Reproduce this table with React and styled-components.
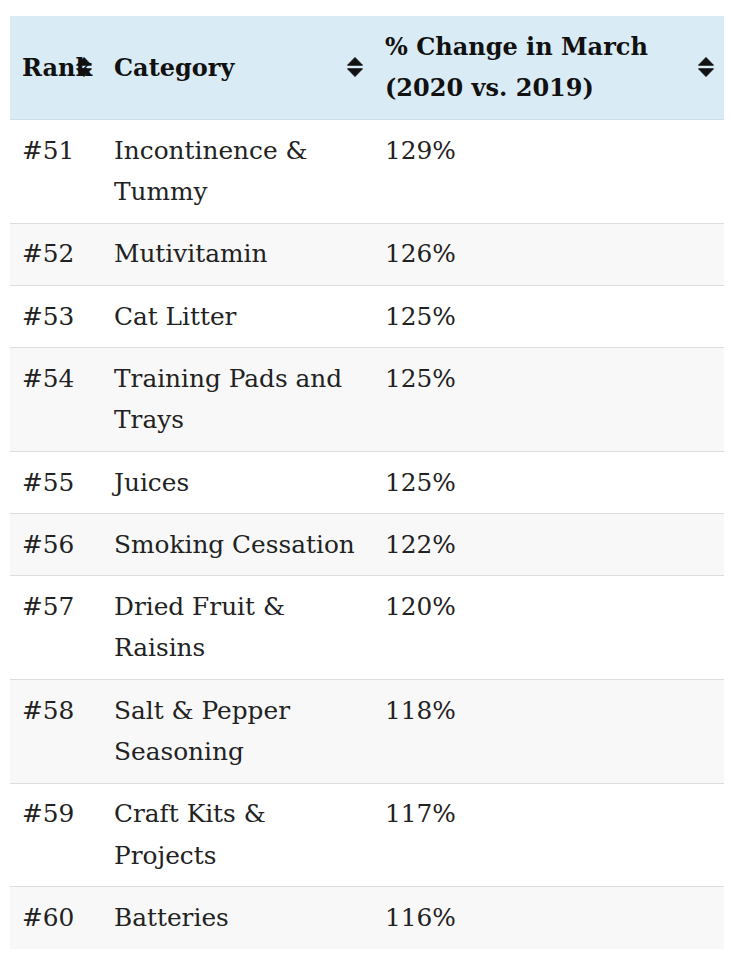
import React from "react";
import styled, { createGlobalStyle } from "styled-components";

const GlobalStyle = createGlobalStyle`
  html, body {
    margin: 0;
    padding: 0;
    background: #ffffff;
  }
`;

const rows = [
  { rank: "#51", category: "Incontinence & Tummy", change: "129%" },
  { rank: "#52", category: "Mutivitamin", change: "126%" },
  { rank: "#53", category: "Cat Litter", change: "125%" },
  { rank: "#54", category: "Training Pads and Trays", change: "125%" },
  { rank: "#55", category: "Juices", change: "125%" },
  { rank: "#56", category: "Smoking Cessation", change: "122%" },
  { rank: "#57", category: "Dried Fruit & Raisins", change: "120%" },
  { rank: "#58", category: "Salt & Pepper Seasoning", change: "118%" },
  { rank: "#59", category: "Craft Kits & Projects", change: "117%" },
  { rank: "#60", category: "Batteries", change: "116%" },
];

const SortIcon = () => (
  <SortGlyph viewBox="0 0 16 20" aria-hidden="true">
    <path d="M8 0.5 L15.5 8.2 H0.5 Z" strokeLinejoin="round" />
    <path d="M0.5 11.8 H15.5 L8 19.5 Z" strokeLinejoin="round" />
  </SortGlyph>
);

export default function App() {
  return (
    <Page>
      <GlobalStyle />
      <Table>
        <colgroup>
          <col style={{ width: 92 }} />
          <col style={{ width: 271 }} />
          <col />
        </colgroup>
        <thead>
          <tr>
            <HeadCell>
              Rank
              <SortIcon />
            </HeadCell>
            <HeadCell>
              Category
              <SortIcon />
            </HeadCell>
            <HeadCell>
              % Change in March
              <br />
              (2020 vs. 2019)
              <SortIcon />
            </HeadCell>
          </tr>
        </thead>
        <tbody>
          {rows.map((r, i) => (
            <Row key={r.rank} $striped={i % 2 === 1}>
              <Cell>{r.rank}</Cell>
              <Cell>{r.category}</Cell>
              <Cell>{r.change}</Cell>
            </Row>
          ))}
        </tbody>
      </Table>
    </Page>
  );
}

const Page = styled.div`
  padding: 16px 8px 12px 10px;
  font-family: "DejaVu Serif", "Liberation Serif", serif;
  color: #222222;
`;

const Table = styled.table`
  width: 100%;
  table-layout: fixed;
  border-collapse: collapse;
  font-size: 24.8px;
  line-height: 41.6px;
`;

const HeadCell = styled.th`
  position: relative;
  background: #d9ebf5;
  text-align: left;
  font-size: 24px;
  font-weight: bold;
  vertical-align: middle;
  padding: 9.8px 30px 9.8px 12px;
  border-bottom: 1px solid #cfdde6;
  color: #111;
  white-space: nowrap;
`;

const SortGlyph = styled.svg`
  position: absolute;
  right: 10px;
  top: 50%;
  width: 16px;
  height: 20px;
  margin-top: -10px;
  fill: #111;
  stroke: #111;
  stroke-width: 1;
`;

const Row = styled.tr`
  background: ${(p) => (p.$striped ? "#f8f8f8" : "#ffffff")};
  border-top: 1px solid #dddddd;
`;

const Cell = styled.td`
  vertical-align: top;
  padding: 9.8px 12px;
`;
